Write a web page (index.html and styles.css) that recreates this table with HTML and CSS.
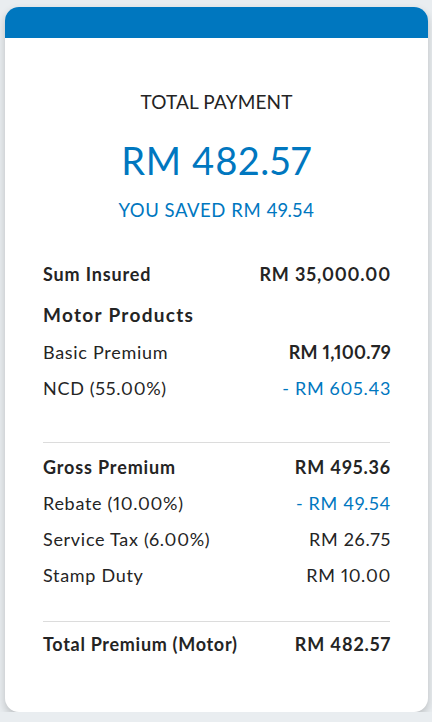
FILE: index.html
```html
<!DOCTYPE html>
<html>
<head>
<meta charset="utf-8">
<link rel="stylesheet" href="styles.css">
</head>
<body>
<div class="card">
  <div class="card-head"></div>
  <div class="card-body">
    <div class="summary">
      <div class="label">TOTAL PAYMENT</div>
      <div class="amount">RM 482.57</div>
      <div class="saved">YOU SAVED RM 49.54</div>
    </div>
    <div class="rows top">
      <div class="row bold tall"><span>Sum Insured</span><span class="val">RM 35,000.00</span></div>
      <div class="row section tall">Motor Products</div>
      <div class="row"><span>Basic Premium</span><span class="val strong">RM 1,100.79</span></div>
      <div class="row"><span>NCD (55.00%)</span><span class="val blue">- RM 605.43</span></div>
    </div>
    <div class="divider first"></div>
    <div class="rows">
      <div class="row bold"><span>Gross Premium</span><span class="val">RM 495.36</span></div>
      <div class="row"><span>Rebate (10.00%)</span><span class="val blue">- RM 49.54</span></div>
      <div class="row"><span>Service Tax (6.00%)</span><span class="val">RM 26.75</span></div>
      <div class="row"><span>Stamp Duty</span><span class="val">RM 10.00</span></div>
    </div>
    <div class="divider second"></div>
    <div class="rows">
      <div class="row bold"><span class="total-label">Total Premium (Motor)</span><span class="val">RM 482.57</span></div>
    </div>
  </div>
</div>
</body>
</html>
```
FILE: styles.css
```css
html, body {
  margin: 0;
  padding: 0;
  background: #e9edf0;
  font-family: Lato, "Noto Sans", sans-serif;
  color: #242424;
  font-variant-numeric: proportional-nums;
}
.card {
  margin: 7px 4px 0 5px;
  height: 705px;
  background: #fff;
  border-radius: 14px;
  overflow: hidden;
  box-shadow: 0 4px 9px rgba(0,0,0,0.2);
}
.card-head {
  height: 31px;
  background: #0077bf;
}
.card-body {
  padding: 0 38px;
}
.summary {
  display: flex;
  flex-direction: column;
  align-items: center;
  padding-top: 52px;
}
.label {
  font-size: 19px;
  line-height: 24px;
  letter-spacing: 0.15px;
}
.amount {
  margin-top: 23px;
  font-size: 38px;
  line-height: 46px;
  color: #0077bf;
  letter-spacing: 0.6px;
}
.saved {
  margin-top: 15px;
  font-size: 18.5px;
  line-height: 24px;
  color: #0077bf;
  letter-spacing: 0.55px;
}
.rows {
  display: flex;
  flex-direction: column;
}
.rows.top {
  margin-top: 32px;
}
.row {
  display: flex;
  justify-content: space-between;
  align-items: center;
  height: 36px;
  font-size: 18px;
  letter-spacing: 0.7px;
}
.row.tall {
  height: 40px;
}
.row.bold {
  font-weight: 700;
  letter-spacing: 0.85px;
}
.row.section {
  font-weight: 700;
  font-size: 19px;
  letter-spacing: 1.3px;
}
.strong {
  font-weight: 700;
  letter-spacing: 0.3px;
}
.total-label {
  letter-spacing: 0.7px;
}
.val {
  margin-right: -1px;
}
.blue {
  color: #0077bf;
}
.divider {
  height: 1px;
  background: #dcdcdc;
}
.divider.first {
  margin-top: 36px;
  margin-bottom: 6px;
}
.divider.second {
  margin-top: 28px;
  margin-bottom: 4px;
}
```
